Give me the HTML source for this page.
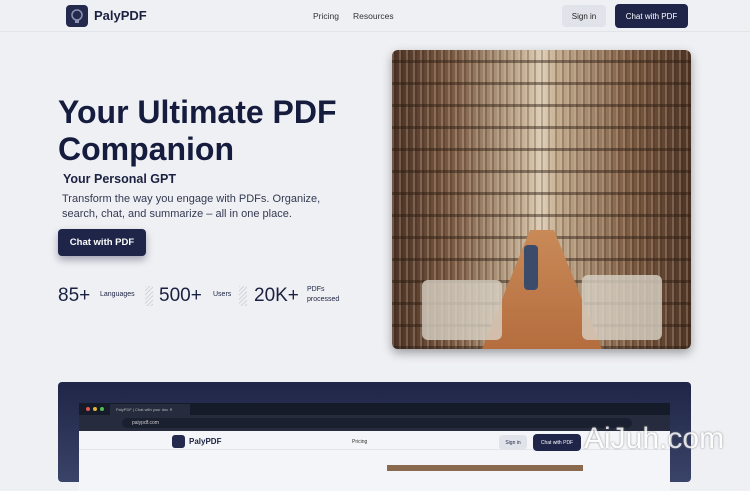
<!DOCTYPE html>
<html><head><meta charset="utf-8"><style>
*{margin:0;padding:0;box-sizing:border-box}
body{width:750px;height:468px;overflow:hidden;background:#eff0f4;font-family:"Liberation Sans",sans-serif;color:#1b2140;position:relative}
.nav{position:absolute;left:0;top:0;width:750px;height:32px;border-bottom:1px solid #e2e4ea}
.abs{position:absolute}
.btn{position:absolute;border-radius:4px;font-size:8px;display:flex;align-items:center;justify-content:center}
</style></head><body>
<div class="nav">
 <div class="abs" style="left:66px;top:5px;width:22px;height:22px;border-radius:4px;background:#232a4e">
  <svg width="22" height="22"><circle cx="11" cy="10" r="5" fill="none" stroke="#8d93b0" stroke-width="1.5"/><rect x="9" y="15" width="4" height="3" fill="#8d93b0"/></svg></div>
 <div class="abs" style="left:94px;top:8px;font-size:13px;font-weight:bold">PalyPDF</div>
 <div class="abs" style="left:313px;top:11px;font-size:8.5px;color:#333">Pricing</div>
 <div class="abs" style="left:353px;top:11px;font-size:8.5px;color:#333">Resources</div>
 <div class="btn" style="left:562px;top:5px;width:44px;height:22px;background:#e1e3ea;color:#222">Sign in</div>
 <div class="btn" style="left:615px;top:4px;width:73px;height:24px;background:#1e2548;color:#fff">Chat with PDF</div>
</div>
<div class="abs" style="left:58px;top:94px;font-size:32px;font-weight:bold;line-height:37px;color:#151c3d">Your Ultimate PDF<br>Companion</div>
<div class="abs" style="left:63px;top:172px;font-size:12.5px;font-weight:bold">Your Personal GPT</div>
<div class="abs" style="left:62px;top:192px;font-size:11px;line-height:15px;color:#333a52">Transform the way you engage with PDFs. Organize,<br>search, chat, and summarize – all in one place.</div>
<div class="btn" style="left:58px;top:229px;width:88px;height:27px;background:#1e2548;color:#fff;font-size:9.5px;font-weight:bold;box-shadow:0 4px 8px rgba(20,25,60,.35)">Chat with PDF</div>
<div class="abs" style="left:58px;top:285px;font-size:19px">85+</div>
<div class="abs" style="left:100px;top:291px;font-size:7px">Languages</div>
<div class="abs" style="left:145px;top:286px;width:8px;height:20px;background:repeating-linear-gradient(135deg,#d3d5dc 0 1px,transparent 1px 3px)"></div>
<div class="abs" style="left:159px;top:285px;font-size:19px">500+</div>
<div class="abs" style="left:213px;top:291px;font-size:7px">Users</div>
<div class="abs" style="left:239px;top:286px;width:8px;height:20px;background:repeating-linear-gradient(135deg,#d3d5dc 0 1px,transparent 1px 3px)"></div>
<div class="abs" style="left:254px;top:285px;font-size:19px">20K+</div>
<div class="abs" style="left:307px;top:285px;font-size:7px;line-height:10px">PDFs<br>processed</div>
<div class="abs" style="left:392px;top:50px;width:299px;height:299px;border-radius:6px;overflow:hidden;box-shadow:0 4px 10px rgba(0,0,0,.35);background:linear-gradient(90deg,#4a3225 0%,#7a5a44 20%,#c9b59a 45%,#e0d2bc 50%,#c4ad90 55%,#7b5a42 80%,#4c3426 100%)">
 <div class="abs" style="left:0;top:0;width:299px;height:299px;background:repeating-linear-gradient(90deg,rgba(220,200,170,.25) 0 2px,rgba(60,35,20,.25) 2px 4px,transparent 4px 7px)"></div>
 <div class="abs" style="left:0;top:0;width:299px;height:299px;background:repeating-linear-gradient(0deg,rgba(40,25,15,.45) 0 3px,transparent 3px 22px)"></div>
 <div class="abs" style="left:90px;top:180px;width:120px;height:119px;background:linear-gradient(180deg,#c98a58,#b56d3e);clip-path:polygon(40% 0,60% 0,100% 100%,0 100%)"></div>
 <div class="abs" style="left:30px;top:230px;width:80px;height:60px;background:#d8d2c6;opacity:.8;border-radius:6px"></div>
 <div class="abs" style="left:190px;top:225px;width:80px;height:65px;background:#d8d2c6;opacity:.8;border-radius:6px"></div>
 <div class="abs" style="left:132px;top:195px;width:14px;height:45px;background:#3d4b6a;border-radius:4px"></div>
</div>
<div class="abs" style="left:58px;top:382px;width:633px;height:100px;border-radius:4px;background:linear-gradient(180deg,#1f2546,#3a4468)">
 <div class="abs" style="left:21px;top:21px;width:591px;height:12px;background:#161b29"></div>
 <div class="abs" style="left:28px;top:25px;width:4px;height:4px;border-radius:50%;background:#e4574e"></div>
 <div class="abs" style="left:35px;top:25px;width:4px;height:4px;border-radius:50%;background:#e2b23c"></div>
 <div class="abs" style="left:42px;top:25px;width:4px;height:4px;border-radius:50%;background:#4bbf4b"></div>
 <div class="abs" style="left:52px;top:22px;width:80px;height:11px;background:#262c3d;color:#bbb;font-size:4px;padding:3px 6px">PalyPDF | Chat with your doc ✕</div>
 <div class="abs" style="left:21px;top:33px;width:591px;height:16px;background:#262c3d"></div>
 <div class="abs" style="left:64px;top:36px;width:510px;height:10px;border-radius:5px;background:#1b2030;color:#ccc;font-size:5px;padding:2px 10px">paiypdf.com</div>
 <div class="abs" style="left:21px;top:49px;width:591px;height:60px;background:#f4f5f8"></div>
 <div class="abs" style="left:21px;top:67px;width:591px;height:1px;background:#e2e4ea"></div>
 <div class="abs" style="left:114px;top:53px;width:13px;height:13px;border-radius:3px;background:#232a4e"></div>
 <div class="abs" style="left:131px;top:55px;font-size:8px;font-weight:bold;color:#1b2140">PalyPDF</div>
 <div class="abs" style="left:294px;top:57px;font-size:5px;color:#333">Pricing</div>
 <div class="btn" style="left:441px;top:53px;width:28px;height:15px;background:#e1e3ea;font-size:5px">Sign in</div>
 <div class="btn" style="left:475px;top:52px;width:48px;height:17px;background:#1e2548;color:#fff;font-size:5px">Chat with PDF</div>
 <div class="abs" style="left:329px;top:83px;width:196px;height:6px;background:#8a6a4e"></div>
</div>
<div class="abs" style="left:584px;top:422px;font-size:30px;color:#fff;opacity:.85;text-shadow:0 0 2px #777">AiJuh.com</div>
</body></html>
